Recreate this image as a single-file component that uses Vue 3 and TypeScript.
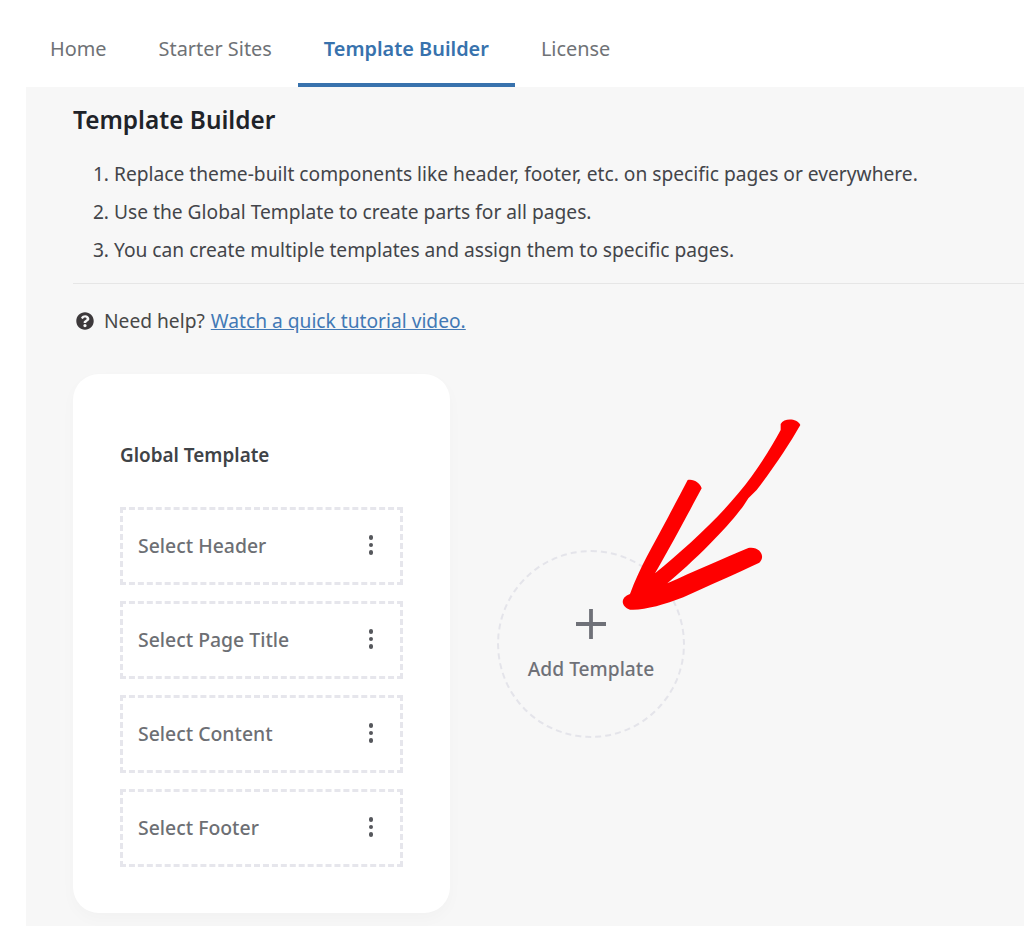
<template>
  <div class="page">
    <nav class="tabs">
      <a
        v-for="tab in tabs"
        :key="tab"
        class="tab"
        :class="{ active: tab === 'Template Builder' }"
      >{{ tab }}</a>
    </nav>

    <main class="panel">
      <h1 class="title">Template Builder</h1>
      <ol class="steps">
        <li v-for="step in steps" :key="step">{{ step }}</li>
      </ol>
      <hr class="divider" />

      <p class="help">
        <svg class="help-icon" viewBox="0 0 512 512" width="18" height="18">
          <path
            fill="#3d393b"
            d="M504 256c0 137-111 248-248 248S8 393 8 256 119 8 256 8s248 111 248 248zM262.700 90c-54.500 0-89.300 23-116.500 63.800-3.500 5.300-2.400 12.400 2.700 16.300l34.700 26.300c5.200 3.900 12.600 3 16.700-2.100 17.900-22.700 30.100-35.800 57.300-35.800 20.400 0 45.700 13.100 45.700 33 0 15-12.400 22.700-32.600 34-23.600 13.200-54.800 29.700-54.800 70.900V300c0 6.600 5.400 12 12 12h56c6.600 0 12-5.400 12-12v-1.300c0-28.600 83.500-29.800 83.500-107.100C379.500 133.400 319 90 262.700 90zM256 339c-25.500 0-46.200 20.700-46.200 46.200 0 25.500 20.700 46.200 46.200 46.200s46.200-20.700 46.200-46.200c0-25.500-20.700-46.200-46.200-46.200z"
          />
        </svg>
        <span>Need help? <a class="link">Watch a quick tutorial video.</a></span>
      </p>

      <div class="content">
        <section class="card">
          <h2 class="card-title">Global Template</h2>
          <div class="slots">
            <div v-for="slot in slots" :key="slot" class="slot">
              <span>{{ slot }}</span>
              <span class="dots"><i></i><i></i><i></i></span>
            </div>
          </div>
        </section>

        <div class="add">
          <svg viewBox="0 0 30 30" width="30" height="30">
            <path d="M15 0v30M0 15h30" stroke="#6f7178" stroke-width="3.800" fill="none" />
          </svg>
          <span>Add Template</span>
        </div>
      </div>
    </main>

    <!-- hand-drawn arrow pasted over the screenshot -->
    <svg class="arrow" viewBox="0 0 600 630" width="200" height="210">
      <path
        fill="#fe0000"
        d="M512 42 C522 24 560 24 571 45 C540 100 490 175 440 240 L415 265 L402 285 C370 330 290 420 172 520 C250 485 340 445 415 414 C450 408 468 440 448 458 C380 490 300 525 220 562 C160 585 100 602 60 599 C32 590 30 562 60 552 C90 470 130 405 175 320 C195 282 215 245 233 210 C250 205 272 220 275 235 C240 300 190 395 135 490 C220 420 315 335 385 250 C435 190 480 120 512 60 Z"
      />
    </svg>
  </div>
</template>

<script setup lang="ts">
const tabs: string[] = ['Home', 'Starter Sites', 'Template Builder', 'License']

const steps: string[] = [
  'Replace theme-built components like header, footer, etc. on specific pages or everywhere.',
  'Use the Global Template to create parts for all pages.',
  'You can create multiple templates and assign them to specific pages.',
]

const slots: string[] = ['Select Header', 'Select Page Title', 'Select Content', 'Select Footer']
</script>

<style>
html,
body {
  margin: 0;
  background: #fff;
}
</style>

<style scoped>
.page {
  position: relative;
  width: 1024px;
  height: 926px;
  overflow: hidden;
  background: #fff;
  font-family: "Noto Sans", "Open Sans", sans-serif;
}

.tabs {
  display: flex;
  height: 87px;
  padding-left: 24px;
  box-sizing: border-box;
}

.tab {
  padding: 33px 26px 0;
  height: 87px;
  box-sizing: border-box;
  line-height: 32px;
  font-size: 19.900px;
  color: #6f7276;
  border-bottom: 4px solid transparent;
}

.tab.active {
  color: #3872ad;
  font-weight: 600;
  border-bottom-color: #3872ad;
  border-radius: 3px 3px 0 0;
}

.panel {
  margin-left: 26px;
  height: 839px;
  box-sizing: border-box;
  padding: 14px 0 0 47px;
  background: #f7f7f7;
}

.title {
  margin: 0;
  font-size: 24.400px;
  line-height: 38px;
  font-weight: 600;
  color: #1f2329;
}

.steps {
  margin: 16px 0 0;
  padding-left: 41px;
  font-size: 19.200px;
  line-height: 38px;
  color: #43454a;
}

.divider {
  margin: 14px 0 0;
  border: 0;
  height: 1px;
  background: #e6e6e6;
}

.help {
  display: flex;
  align-items: center;
  gap: 10px;
  margin: 21px 0 0 3px;
  font-size: 19.200px;
  line-height: 32px;
  color: #484848;
}

.link {
  margin-left: 1px;
  color: #4279b5;
  text-decoration: underline;
}

.content {
  display: flex;
  align-items: center;
  gap: 47px;
  margin-top: 37px;
}

.card {
  width: 377px;
  height: 539px;
  box-sizing: border-box;
  padding: 65px 47px 0;
  background: #fff;
  border-radius: 26px;
  box-shadow: 0 6px 16px rgba(0, 0, 0, 0.025);
}

.card-title {
  margin: 0;
  font-size: 18.900px;
  line-height: 32px;
  font-weight: 600;
  color: #3f4347;
}

.slots {
  display: flex;
  flex-direction: column;
  gap: 16px;
  margin-top: 36px;
}

.slot {
  display: flex;
  align-items: center;
  justify-content: space-between;
  height: 78px;
  box-sizing: border-box;
  padding: 0 27px 2px 15px;
  border: 3px dashed #e6e6ec;
  font-size: 19.400px;
  font-weight: 500;
  color: #6d6f74;
}

.dots {
  display: flex;
  flex-direction: column;
  gap: 3px;
}

.dots i {
  display: block;
  width: 4.500px;
  height: 4.500px;
  border-radius: 50%;
  background: #55575c;
}

.add {
  display: flex;
  flex-direction: column;
  align-items: center;
  justify-content: center;
  gap: 16px;
  width: 188px;
  height: 188px;
  box-sizing: border-box;
  margin-top: 1px;
  padding-top: 2px;
  border: 2px dashed #e4e4ea;
  border-radius: 50%;
  font-size: 19.200px;
  font-weight: 500;
  color: #6f7178;
}

.add span {
  white-space: nowrap;
}

.arrow {
  position: absolute;
  left: 610px;
  top: 410px;
}
</style>
